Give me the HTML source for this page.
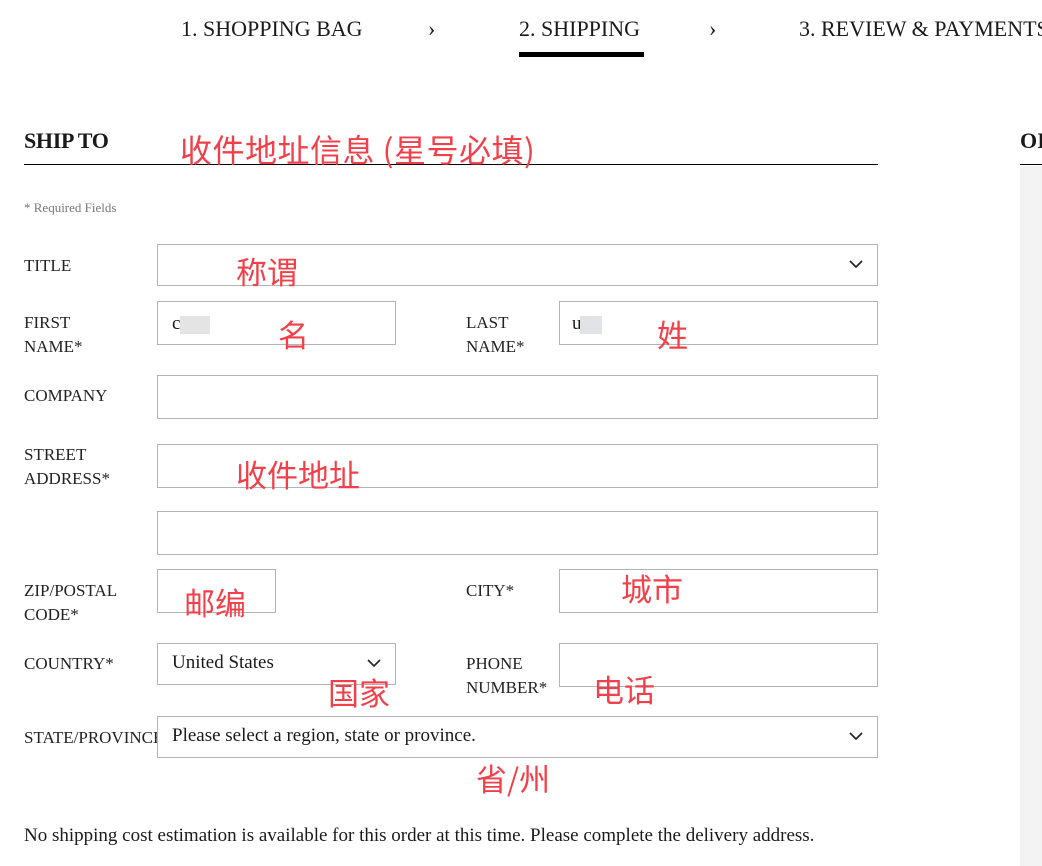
<!DOCTYPE html>
<html><head><meta charset="utf-8"><style>
body{margin:0;width:1042px;height:853px;background:#fff;position:relative;overflow:hidden;font-family:"Liberation Serif","Noto Serif CJK SC",serif;color:#1a1a1a}
.a{position:absolute;white-space:nowrap}
.step{font-size:22px;top:16px}
.lbl{font-size:17px;line-height:24px;color:#222}
.in{position:absolute;border:1px solid #b3b3b3;box-sizing:border-box;background:#fff}
.red{position:absolute;color:#f2404a;font-family:"Noto Sans CJK SC","WenQuanYi Zen Hei",sans-serif;font-size:31px;white-space:nowrap;line-height:1}
.chev{position:absolute;right:14px;top:50%;margin-top:-6px}
</style></head><body>
<div class="a step" style="left:181px">1. SHOPPING BAG</div>
<div class="a step" style="left:428px">›</div>
<div class="a step" style="left:519px">2. SHIPPING</div>
<div class="a" style="left:519px;top:52px;width:125px;height:5px;background:#000"></div>
<div class="a step" style="left:709px">›</div>
<div class="a step" style="left:799px">3. REVIEW &amp; PAYMENTS</div>

<div class="a" style="left:24px;top:128px;font-size:22px;font-weight:bold;letter-spacing:-0.3px">SHIP TO</div>
<div class="a" style="left:24px;top:164px;width:854px;height:1px;background:#000"></div>
<div class="a" style="left:1020px;top:128px;font-size:22px;font-weight:bold">OI</div>
<div class="a" style="left:1020px;top:164px;width:22px;height:1px;background:#000"></div>
<div class="a" style="left:1020px;top:166px;width:22px;height:700px;background:#f3f3f3"></div>
<div class="red" style="left:180px;top:133px;font-size:32px;letter-spacing:0.5px">收件地址信息 (星号必填)</div>
<div class="a" style="left:24px;top:200px;font-size:13px;color:#777">* Required Fields</div>

<div class="a lbl" style="left:24px;top:254px">TITLE</div>
<div class="in" style="left:157px;top:244px;width:721px;height:42px"><svg class="chev" width="14" height="10" viewBox="0 0 14 10"><path d="M1 2l6 6 6-6" fill="none" stroke="#222" stroke-width="1.6"/></svg></div>
<div class="red" style="left:236px;top:255px">称谓</div>

<div class="a lbl" style="left:24px;top:311px">FIRST<br>NAME*</div>
<div class="in" style="left:157px;top:301px;width:239px;height:44px"><span class="a" style="left:14px;top:11px;font-size:19px">ca</span><span class="a" style="left:22px;top:14px;width:30px;height:18px;background:#e4e4e4"></span></div>
<div class="red" style="left:278px;top:318px">名</div>
<div class="a lbl" style="left:466px;top:311px">LAST<br>NAME*</div>
<div class="in" style="left:559px;top:301px;width:319px;height:44px"><span class="a" style="left:12px;top:11px;font-size:19px">u</span><span class="a" style="left:20px;top:14px;width:22px;height:18px;background:#e2e3e7"></span></div>
<div class="red" style="left:657px;top:318px">姓</div>

<div class="a lbl" style="left:24px;top:384px">COMPANY</div>
<div class="in" style="left:157px;top:375px;width:721px;height:44px"></div>

<div class="a lbl" style="left:24px;top:443px">STREET<br>ADDRESS*</div>
<div class="in" style="left:157px;top:444px;width:721px;height:44px"></div>
<div class="red" style="left:236px;top:458px">收件地址</div>
<div class="in" style="left:157px;top:511px;width:721px;height:44px"></div>

<div class="a lbl" style="left:24px;top:579px">ZIP/POSTAL<br>CODE*</div>
<div class="in" style="left:157px;top:569px;width:119px;height:44px"></div>
<div class="red" style="left:184px;top:586px">邮编</div>
<div class="a lbl" style="left:466px;top:579px">CITY*</div>
<div class="in" style="left:559px;top:569px;width:319px;height:44px"></div>
<div class="red" style="left:621px;top:572px">城市</div>

<div class="a lbl" style="left:24px;top:652px">COUNTRY*</div>
<div class="in" style="left:157px;top:643px;width:239px;height:42px"><span class="a" style="left:14px;top:8px;font-size:19px">United States</span><svg class="chev" width="14" height="10" viewBox="0 0 14 10"><path d="M1 2l6 6 6-6" fill="none" stroke="#222" stroke-width="1.6"/></svg></div>
<div class="red" style="left:328px;top:676px">国家</div>
<div class="a lbl" style="left:466px;top:652px">PHONE<br>NUMBER*</div>
<div class="in" style="left:559px;top:643px;width:319px;height:44px"></div>
<div class="red" style="left:593px;top:673px">电话</div>

<div class="a lbl" style="left:24px;top:726px;width:133px;overflow:hidden">STATE/PROVINCE</div>
<div class="in" style="left:157px;top:716px;width:721px;height:42px"><span class="a" style="left:14px;top:8px;font-size:19px">Please select a region, state or province.</span><svg class="chev" width="14" height="10" viewBox="0 0 14 10"><path d="M1 2l6 6 6-6" fill="none" stroke="#222" stroke-width="1.6"/></svg></div>
<div class="red" style="left:476px;top:762px">省/州</div>

<div class="a" style="left:24px;top:825px;font-size:19px">No shipping cost estimation is available for this order at this time. Please complete the delivery address.</div>
</body></html>
